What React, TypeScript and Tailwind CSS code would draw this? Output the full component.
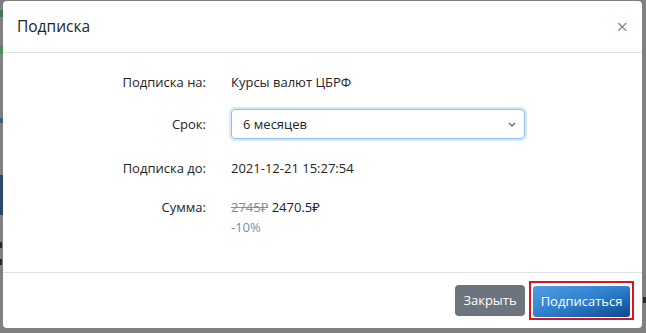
import React from 'react';

const rows = [
  { label: 'Подписка на:', value: 'Курсы валют ЦБРФ' },
  { label: 'Подписка до:', value: '2021-12-21 15:27:54' },
];

const Row = ({ label, children, className = '' }: { label: string; children: React.ReactNode; className?: string }) => (
  <div className={`grid grid-cols-[186px_1fr] gap-x-[25px] ${className}`}>
    <div className="text-right leading-[30px]">{label}</div>
    <div className="leading-[30px]">{children}</div>
  </div>
);

const App = () => {
  return (
    <div className="relative w-[646px] h-[333px] overflow-hidden bg-[#808080] font-['Open_Sans','Noto_Sans',sans-serif] text-[13px] text-[#212529]">
      {/* page behind the backdrop */}
      <div className="absolute left-0 top-[10px] w-[3px] h-[7px] bg-[#3f7a52]" />
      <div className="absolute left-0 top-[46px] w-[3px] h-[8px] bg-[#4a8a5c]" />
      <div className="absolute left-0 top-[118px] w-[3px] h-[5px] bg-[#3d5f86]" />
      <div className="absolute left-0 top-[175px] w-[3px] h-[40px] bg-[#29496b]" />
      <div className="absolute left-0 top-[242px] w-[2px] h-[6px] bg-[#2a2a2a]" />
      <div className="absolute left-0 top-[259px] w-[2px] h-[6px] bg-[#2a2a2a]" />
      <div className="absolute right-0 top-[297px] w-[3px] h-[6px] bg-[#2a2a2a]" />

      <div className="relative ml-[3px] mt-[1px] w-[639px] h-[327px] bg-white rounded-[4px] flex flex-col">
        <div className="h-[52px] border-b border-[#dee2e6] flex items-center justify-between pl-[14px] pr-[14px]">
          <h5 className="text-[15.5px] leading-none">Подписка</h5>
          <span className="text-[20px] leading-none text-[#8c8c8c]">×</span>
        </div>

        <div className="flex-1 pl-[17px] pt-[14px]">
          <Row label={rows[0].label}>{rows[0].value}</Row>
          <Row label="Срок:" className="mt-[12px]">
            <div className="w-[294px] h-[30px] rounded-[4px] border border-[#8fc0ee] shadow-[0_0_0_2px_rgba(128,179,230,0.3)] flex items-center justify-between pl-[11px] pr-[8px]">
              <span>6 месяцев</span>
              <svg width="8" height="5" viewBox="0 0 8 5" fill="none" stroke="#555" strokeWidth="1.1">
                <path d="M1 1l3 3 3-3" />
              </svg>
            </div>
          </Row>
          <Row label={rows[1].label} className="mt-[14px]">{rows[1].value}</Row>
          <div className="grid grid-cols-[186px_1fr] gap-x-[25px] mt-[14px] leading-[20px]">
            <div className="text-right">Сумма:</div>
            <div>
              <div>
                <span className="line-through text-[#868e96]">2745₽</span> 2470.5₽
              </div>
              <div className="text-[#868e96]">-10%</div>
            </div>
          </div>
        </div>

        <div className="h-[56px] border-t border-[#dee2e6] flex items-center justify-end pr-[8px] gap-[4px]">
          <button className="h-[31px] w-[70px] rounded-[4px] bg-[#6c757d] text-white">Закрыть</button>
          <div className="border-2 border-[#d9141f] px-[2px] pt-[3px] pb-[1px]">
            <button className="h-[31px] w-[97px] rounded-[3px] bg-gradient-to-br from-[#4f9ee3] via-[#2f7fcc] to-[#0b4a8e] text-white">
              Подписаться
            </button>
          </div>
        </div>
      </div>
    </div>
  );
};

export default App;
